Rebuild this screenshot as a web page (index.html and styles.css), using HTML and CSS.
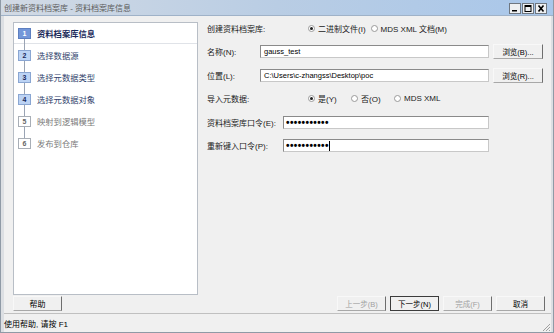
FILE: index.html
```html
<!DOCTYPE html>
<html lang="zh-CN">
<head>
<meta charset="utf-8">
<title>创建新资料档案库</title>
<link rel="stylesheet" href="styles.css">
</head>
<body>
<div class="window">
  <div class="titlebar">
    <span class="title">创建新资料档案库 - 资料档案库信息</span>
    <div class="winbtns">
      <span class="wb"><svg width="8" height="7" viewBox="0 0 8 7"><rect x="1" y="5" width="5" height="1.5" fill="#000"/></svg></span>
      <span class="wb"><svg width="8" height="7" viewBox="0 0 8 7"><rect x="1" y="0.5" width="6" height="6" fill="none" stroke="#000" stroke-width="1"/><rect x="1" y="0.5" width="6" height="1.5" fill="#000"/></svg></span>
      <span class="wb"><svg width="8" height="7" viewBox="0 0 8 7"><path d="M1.5 0.5 L6.5 6.5 M6.5 0.5 L1.5 6.5" stroke="#000" stroke-width="1.6"/></svg></span>
    </div>
  </div>
  <div class="body">
    <div class="main">
      <div class="steps">
        <div class="step current"><span class="num">1</span><span class="lbl">资料档案库信息</span></div>
        <div class="step done"><span class="num">2</span><span class="lbl">选择数据源</span></div>
        <div class="step done"><span class="num">3</span><span class="lbl">选择元数据类型</span></div>
        <div class="step done"><span class="num">4</span><span class="lbl">选择元数据对象</span></div>
        <div class="step todo"><span class="num">5</span><span class="lbl">映射到逻辑模型</span></div>
        <div class="step todo last"><span class="num">6</span><span class="lbl">发布到仓库</span></div>
      </div>
      <div class="form">
        <div class="row">
          <span class="label lw-radio">创建资料档案库:</span>
          <span class="radio r-first"><span class="circle on"></span>二进制文件(I)</span>
          <span class="radio"><span class="circle"></span>MDS XML 文档(M)</span>
        </div>
        <div class="row">
          <span class="label lw-short">名称(N):</span>
          <span class="field wide">gauss_test</span>
          <span class="btn browse">浏览(B)...</span>
        </div>
        <div class="row">
          <span class="label lw-short">位置(L):</span>
          <span class="field wide">C:\Users\c-zhangss\Desktop\poc</span>
          <span class="btn browse">浏览(R)...</span>
        </div>
        <div class="row">
          <span class="label lw-radio">导入元数据:</span>
          <span class="radio fixed"><span class="circle on"></span>是(Y)</span>
          <span class="radio fixed"><span class="circle"></span>否(O)</span>
          <span class="radio"><span class="circle"></span>MDS XML</span>
        </div>
        <div class="row">
          <span class="label lw-long">资料档案库口令(E):</span>
          <span class="field pwd">•••••••••••</span>
        </div>
        <div class="row">
          <span class="label lw-long">重新键入口令(P):</span>
          <span class="field pwd">•••••••••••<span class="caret"></span></span>
        </div>
      </div>
    </div>
    <div class="btnrow">
      <span class="btn help">帮助</span>
      <span class="spacer"></span>
      <span class="btn nav disabled">上一步(B)</span>
      <span class="btn nav default">下一步(N)</span>
      <span class="btn nav disabled">完成(F)</span>
      <span class="btn nav">取消</span>
    </div>
    <div class="status">
      <span class="status-text">使用帮助, 请按 F1</span>
      <svg class="grip" width="10" height="10" viewBox="0 0 10 10"><path d="M9 2 L2 9 M9 5 L5 9 M9 8 L8 9" stroke="#a0a0a0" stroke-width="1"/></svg>
    </div>
  </div>
</div>
</body>
</html>
```

FILE: styles.css
```css
* { box-sizing: border-box; margin: 0; padding: 0; }
html, body { width: 554px; height: 333px; overflow: hidden; }
body {
  background: #f0f0f0;
  font-family: "Liberation Sans", "Noto Sans CJK SC", sans-serif;
  font-size: 7.5px;
  color: #000;
  white-space: nowrap;
}
.window {
  height: 333px;
  display: flex;
  flex-direction: column;
  border-left: 1px solid #8f9aa6;
  border-right: 1px solid #8f9aa6;
  border-bottom: 1px solid #8f9aa6;
}
.titlebar {
  height: 16px;
  flex: none;
  display: flex;
  align-items: center;
  justify-content: space-between;
  padding: 0 6px 0 3px;
  background: linear-gradient(to right, #d2dae4, #b9cde4 50%, #a9c7ea);
  border-bottom: 1px solid #9fb2c8;
}
.title { color: #5c5c5c; font-size: 8px; }
.winbtns { display: flex; gap: 1px; padding-top: 1px; }
.wb {
  width: 12px; height: 11px;
  display: flex; align-items: center; justify-content: center;
  background: #eef0f2;
  border: 1px solid #6f7780;
}
.body {
  flex: 1;
  display: flex;
  flex-direction: column;
  border-left: 3px solid #dcdfe3;
  border-right: 2px solid #dcdfe3;
}
.main {
  height: 279px;
  display: flex;
  padding-top: 4px;
}
.steps {
  width: 185px;
  height: 273px;
  flex: none;
  margin: 2px 0 0 9px;
  background: #fff;
  border: 1px solid #b8bec6;
}
.step {
  height: 22px;
  display: flex;
  align-items: center;
  padding-left: 4px;
  position: relative;
  font-size: 8.3px;
}
.step.current { height: 21px; border-bottom: 1px solid #e0e3e8; }
.num {
  width: 13px; height: 11px;
  flex: none;
  display: flex; align-items: center; justify-content: center;
  font-weight: bold; font-size: 7px;
  margin-right: 6px;
  border: 1px solid #8aa6d2;
  position: relative; z-index: 1;
}
.step:not(.last)::after {
  content: "";
  position: absolute;
  left: 10px;
  top: 16px;
  height: 17px;
  border-left: 1px solid #9aa4b4;
}
.current .num { background: #7397d9; color: #fff; border-color: #5d7fc0; }
.current .lbl { font-weight: bold; color: #1a2a5a; }
.done .num { background: #bcd3f4; color: #1a2a5a; border-color: #8aa6d2; }
.done .lbl { color: #2f3f6c; }
.todo .num { background: #fff; color: #666; border-color: #a8aeb6; }
.todo .lbl { color: #7a7a7a; }

.form {
  flex: 1;
  display: flex;
  flex-direction: column;
  gap: 7.6px;
  padding-left: 9px;
}
.row { height: 16px; display: flex; align-items: center; }
.label { color: #202020; font-size: 8px; flex: none; }
.lw-radio { width: 101px; }
.lw-short { width: 53px; }
.lw-long { width: 76px; }
.radio { display: flex; align-items: center; color: #202020; font-size: 8px; flex: none; }
.r-first { margin-right: 5px; }
.radio.fixed { width: 43px; }
.circle {
  width: 7px; height: 7px; border-radius: 50%;
  flex: none;
  border: 1px solid #9a9a9a; background: #fff;
  margin-right: 3px;
  display: flex; align-items: center; justify-content: center;
}
.circle.on::after { content: ""; width: 3px; height: 3px; border-radius: 50%; background: #222; }
.field {
  height: 13px;
  flex: none;
  background: #fff;
  border: 1px solid #c8c8c8;
  border-top-color: #8a8a8a;
  border-left-color: #8a8a8a;
  display: flex; align-items: center;
  padding-left: 3px;
  font-size: 7.5px;
  color: #000;
}
.wide { width: 229px; }
.pwd { width: 206px; font-size: 10px; letter-spacing: 0.4px; font-weight: bold; padding-left: 2px; }
.caret { width: 1px; height: 10px; background: #000; margin-left: 0; }
.btn {
  display: flex; align-items: center; justify-content: center;
  flex: none;
  background: #f0f0f0;
  border: 1px solid #f8f8f8;
  border-right-color: #6e6e6e;
  border-bottom-color: #a8a8a8;
  font-size: 7.5px;
  color: #000;
}
.browse { width: 50px; height: 15px; margin-left: 4px; }
.btnrow {
  height: 17px;
  display: flex;
  align-items: center;
  padding: 0 6px 0 9px;
}
.help { width: 49px; height: 15px; font-size: 8px; }
.spacer { flex: 1; }
.nav { width: 49px; height: 15px; margin-left: 4px; }
.nav.disabled { color: #a0a0a0; }
.nav.default { border: 1px solid #3c3c3c; }
.status {
  flex: 1;
  display: flex;
  align-items: center;
  justify-content: space-between;
  border-top: 1px solid #c0c0c0;
  margin-top: 1px;
}
.status-text { font-size: 8px; color: #000; }
.grip { align-self: flex-end; }
```
